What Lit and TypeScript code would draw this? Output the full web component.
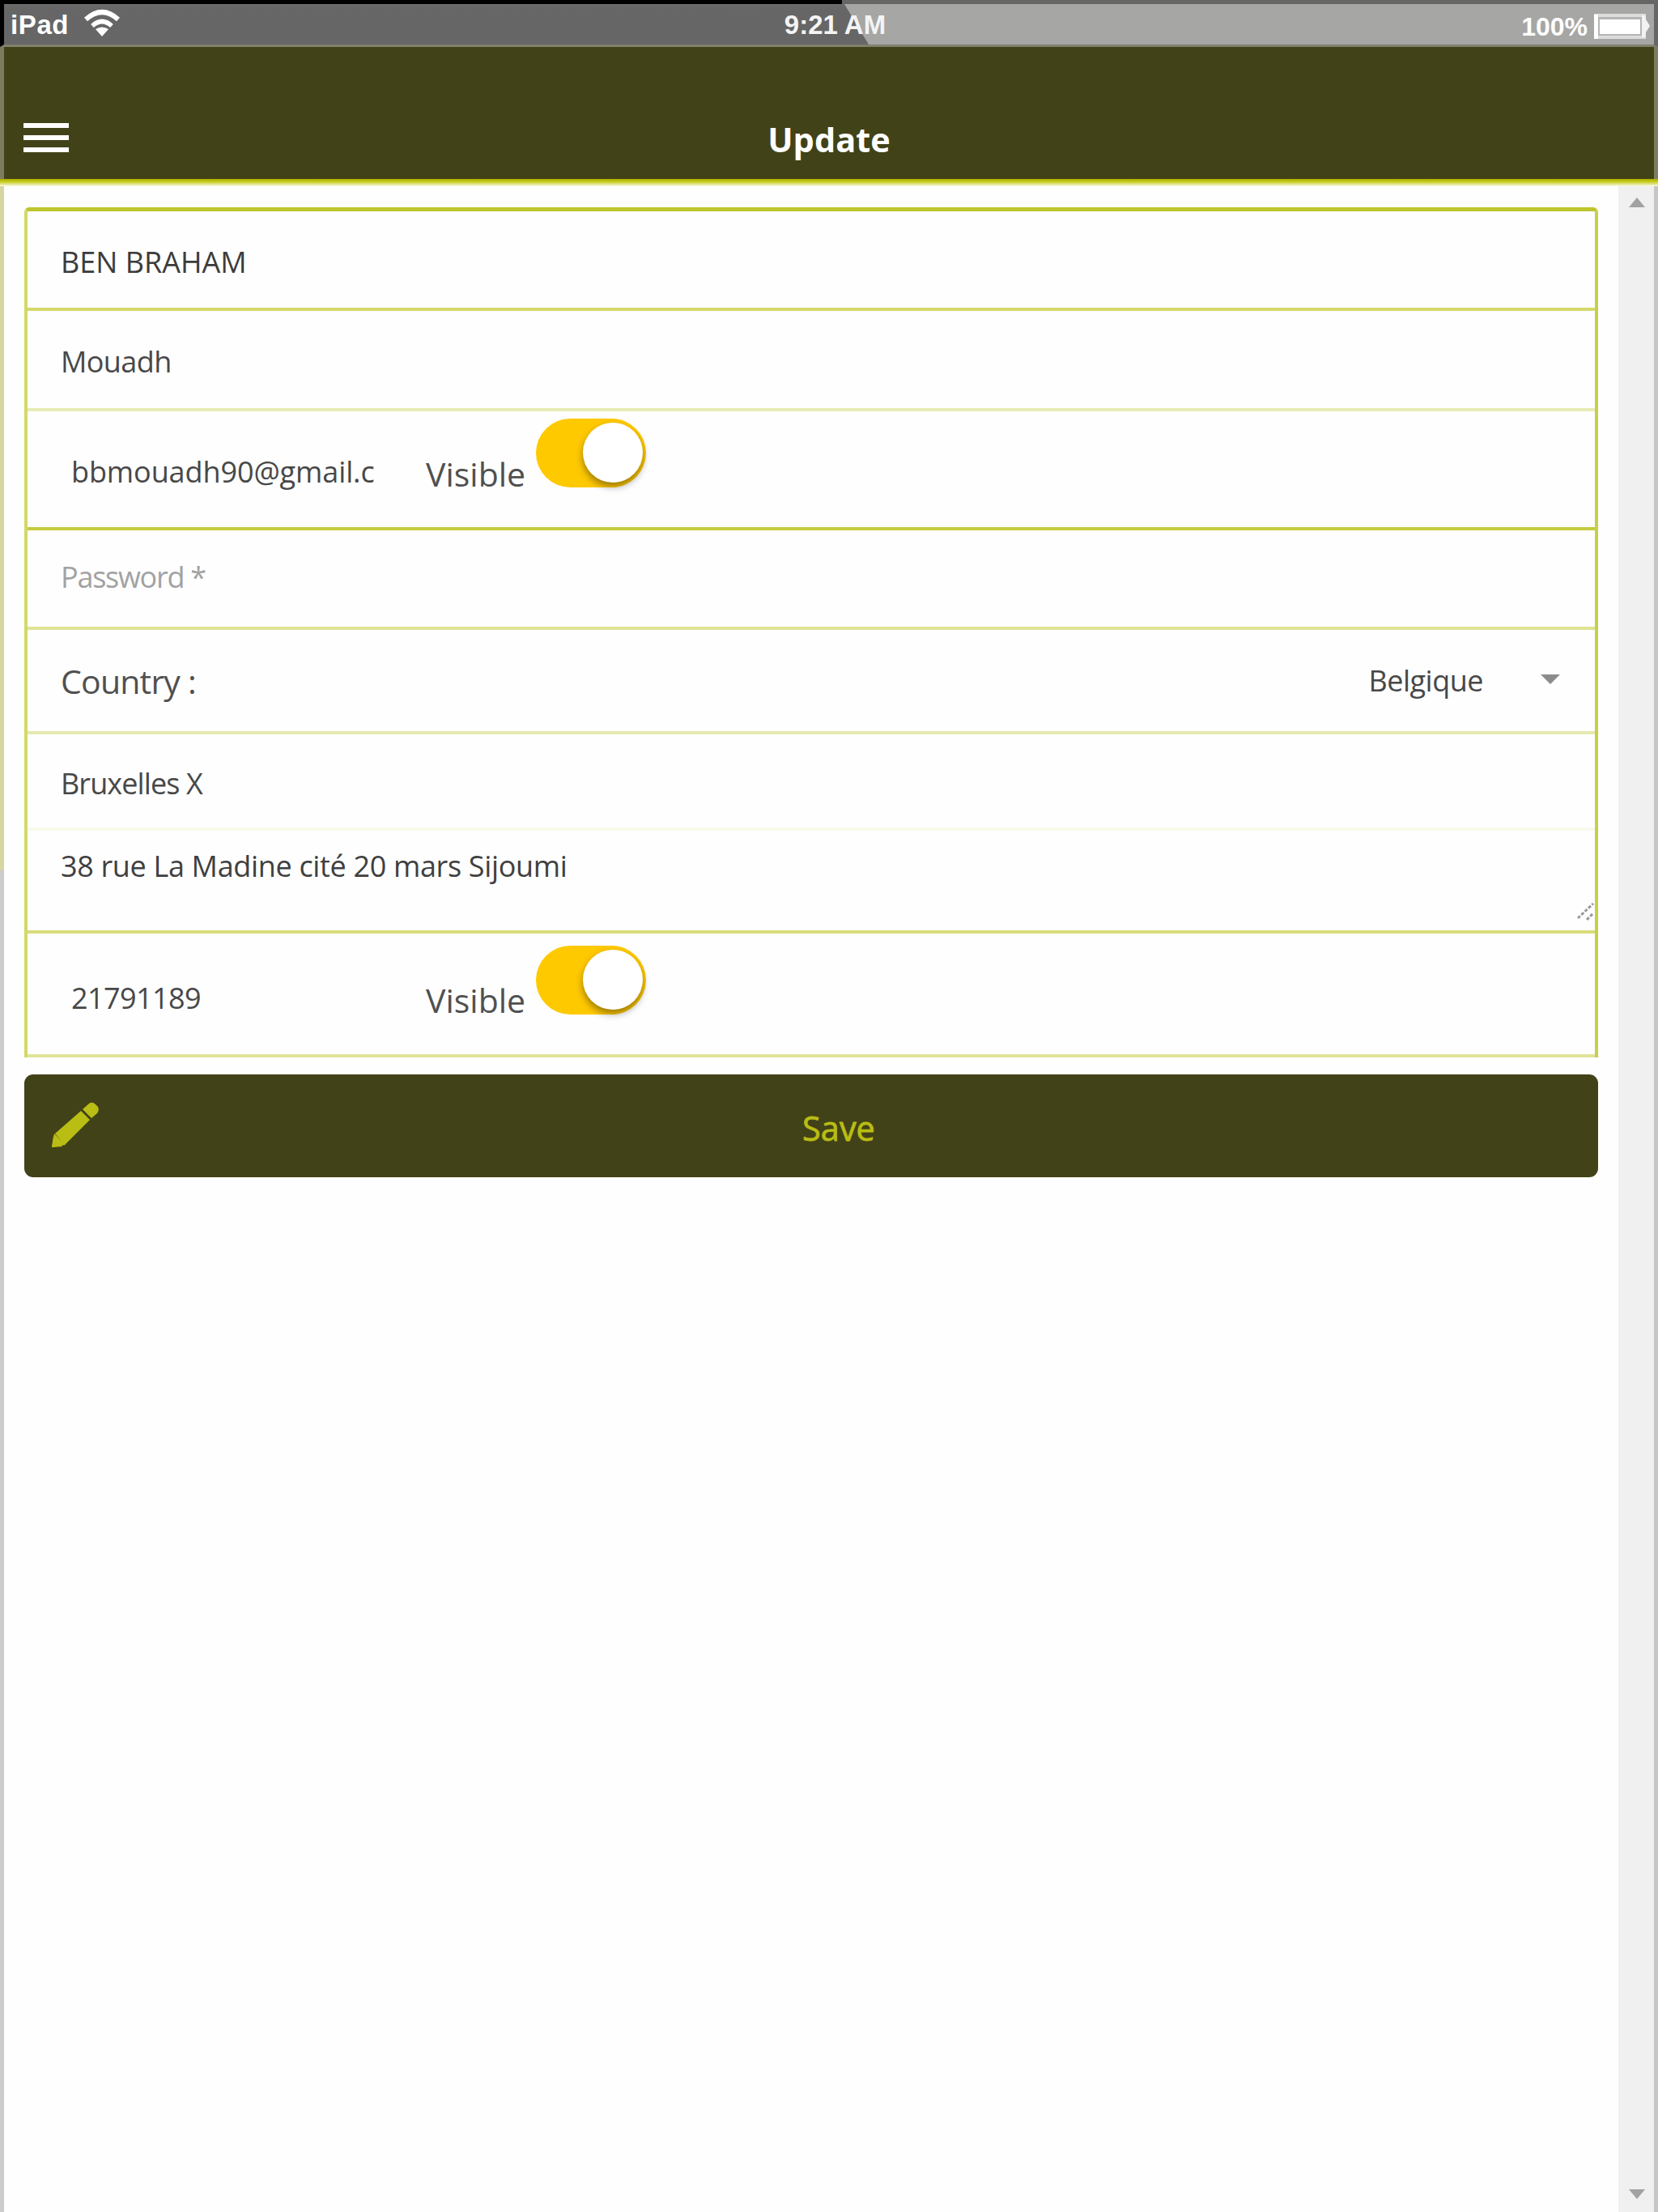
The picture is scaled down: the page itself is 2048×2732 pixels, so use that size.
import { LitElement, html, css } from "lit";
import { customElement } from "lit/decorators.js";

@customElement("toggle-switch")
class ToggleSwitch extends LitElement {
  static styles = css`
    :host { display: block; }
    .track {
      box-sizing: border-box;
      width: 136px;
      height: 85px;
      border-radius: 43px;
      background: #ffc900;
      padding: 5px 4px 5px;
      display: flex;
      justify-content: flex-end;
    }
    .knob {
      width: 74px;
      height: 74px;
      border-radius: 50%;
      background: #fff;
      box-shadow: 0 5px 10px rgba(0, 0, 0, 0.4);
    }
  `;
  render() {
    return html`<div class="track"><div class="knob"></div></div>`;
  }
}

@customElement("status-bar")
class StatusBar extends LitElement {
  static styles = css`
    :host { display: block; }
    .bar {
      box-sizing: border-box;
      height: 58px;
      border: 5px solid #000;
      border-right-color: #666;
      border-bottom: 3px solid #80806c;
      border-top: 0;
      display: grid;
      grid-template-columns: 1fr auto 1fr;
      background: linear-gradient(#6f6f6f, #666 12px);
      color: #fff;
      font: bold 33px/50px "Liberation Sans", Arial, sans-serif;
      position: relative;
      padding-top: 5px;
    }
    .cap { position: absolute; left: -5px; top: 0; width: 2048px; height: 5px; background: #000; }
    .glare { position: absolute; left: 1035px; top: 0; width: 1003px; height: 55px; background: #a6a6a5; clip-path: polygon(0 0, 100% 0, 100% 100%, 33px 100%); }
    .glarecap { position: absolute; left: 1035px; top: 0; width: 1008px; height: 5px; background: #666; }
    .left, .mid, .right { position: relative; display: flex; height: 50px; }
    .left { padding-left: 8px; gap: 18px; }
    .left .text { letter-spacing: 0.6px; }
    .mid { color: #f4f4f4; padding-left: 15px; }
    .text { line-height: 52px; }
    .right { justify-content: flex-end; gap: 8px; }
    .pct { font-size: 32px; line-height: 56px; }
    .wifi { width: 46px; height: 34px; margin-top: 6px; }
    .battery { width: 70px; height: 32px; margin: 12px 4px 0 0; }
  `;
  render() {
    return html`
      <div class="bar">
        <div class="cap"></div>
        <div class="glare"></div>
        <div class="glarecap"></div>
        <div class="left">
          <span class="text">iPad</span>
          <svg class="wifi" viewBox="0 0 46 34">
            <path d="M3 13 Q23 -5 43 13" fill="none" stroke="#fff" stroke-width="6" />
            <path d="M11 21 Q23 10 35 21" fill="none" stroke="#fff" stroke-width="5.5" />
            <path d="M15 25 Q23 20 31 25 L23 34 Z" fill="#fff" />
          </svg>
        </div>
        <div class="mid"><span class="text">9:21 AM</span></div>
        <div class="right">
          <span class="pct">100%</span>
          <svg class="battery" viewBox="0 0 70 32">
            <rect x="2" y="2" width="60" height="27" fill="#b5b5b5" stroke="#dcdcdc" stroke-width="4" />
            <rect x="0" y="1" width="5" height="30" fill="#fff" />
            <rect x="7" y="7" width="50" height="18" fill="#fff" />
            <path d="M59 2 h5 v5 l5 8 l-5 8 v6 h-5 z" fill="#f2f2f2" />
          </svg>
        </div>
      </div>
    `;
  }
}

@customElement("app-root")
class AppRoot extends LitElement {
  static styles = css`
    :host {
      display: block;
      width: 2048px;
      height: 2732px;
      overflow: hidden;
      background: #fff;
      font-family: "Open Sans", "Noto Sans", sans-serif;
      color: #484848;
    }
    .page { display: flex; flex-direction: column; height: 2732px; }
    .header {
      box-sizing: border-box;
      height: 163px;
      display: grid;
      grid-template-columns: 1fr auto 1fr;
      background: #424218;
      border-left: 5px solid #7c7c5c;
      border-right: 5px solid #7c7c62;
      color: #fff;
    }
    .menu { display: flex; flex-direction: column; gap: 9px; padding: 94px 0 0 24px; }
    .line { width: 56px; height: 6px; background: #fff; }
    .title { font-weight: 700; font-size: 41.5px; line-height: 56px; padding-top: 86px; }
    .rule { height: 9px; background: linear-gradient(#a8ac00, #c4c916 3px, #dce07a 6px, #fbfcec); }
    .body { flex: 1; display: flex; min-height: 0; }
    .edge { width: 5px; display: flex; flex-direction: column; }
    .edge-top { height: 845px; background: #d6d6a2; }
    .edge-rest { flex: 1; background: #ccc; }
    .content { flex: 1; padding: 26px 25px 0; background: #fefefe; }
    .form {
      border: solid #d3d968;
      border-width: 5px 4px 0 4px;
      border-top-color: #bfc42e;
      border-right-color: #c8cf48;
      border-radius: 6px 6px 0 0;
    }
    .row {
      box-sizing: border-box;
      display: flex;
      border-bottom: 4px solid #d4d96c;
      padding-left: 41px;
      font-size: 36px;
      line-height: 50px;
    }
    .surname { height: 123px; padding-top: 38px; color: #3c3c3c; }
    .firstname { height: 124px; padding-top: 38px; border-color: #e8ebb6; letter-spacing: -0.6px; }
    .email { height: 147px; border-color: #c5cb3e; }
    .password { height: 123px; padding-top: 33px; border-color: #dfe392; color: #a2a2a2; letter-spacing: -1.25px; }
    .country { height: 129px; border-color: #e6e9b0; justify-content: space-between; padding-right: 43px; }
    .city { height: 119px; padding-top: 36px; border-color: #f8faea; letter-spacing: -0.9px; }
    .address { height: 127px; padding-top: 19px; border-color: #d9dd7c; justify-content: space-between; color: #404040; letter-spacing: -0.34px; }
    .phone { height: 153px; border-color: #e0e49a; }
    .value { width: 439px; padding-left: 13px; box-sizing: border-box; letter-spacing: -0.1px; }
    .label { font-size: 41px; color: #505050; }
    .email .value { padding-top: 50px; }
    .email .label { padding-top: 52px; }
    .email .switch { margin-top: 9px; }
    .phone .value { padding-top: 55px; letter-spacing: -0.6px; }
    .phone .label { padding-top: 57px; }
    .phone .switch { margin-top: 15px; }
    .email .label, .phone .label { width: 136px; padding-left: 12px; }
    .country .label { padding-top: 38px; letter-spacing: -0.8px; }
    .select { display: flex; gap: 71px; padding-top: 38px; letter-spacing: -0.5px; }
    .arrow { width: 24px; height: 12px; margin-top: 17px; fill: #8c8c8c; }
    .grip { width: 24px; height: 26px; margin: 68px 0 0; }
    .save {
      box-sizing: border-box;
      height: 127px;
      margin-top: 21px;
      border-radius: 11px;
      background: #424218;
      color: #b9bd14;
      display: grid;
      grid-template-columns: 1fr auto 1fr;
      padding: 33px 0 0 33px;
      font-size: 41.5px;
      line-height: 66px;
    }
    .save-label { padding-left: 35px; -webkit-text-stroke: 0.8px #b9bd14; }
    .pencil { width: 60px; height: 58px; }
    .scroll {
      width: 44px;
      background: #f0f0f0;
      display: flex;
      flex-direction: column;
      justify-content: space-between;
      align-items: center;
      padding: 14px 0 16px 2px;
      box-sizing: border-box;
    }
    .tri { width: 20px; height: 12px; fill: #a2a2a2; }
    .side { width: 5px; background: #c6c6c6; }
  `;

  render() {
    return html`
      <div class="page">
        <status-bar></status-bar>
        <div class="header">
          <div class="menu">
            <div class="line"></div>
            <div class="line"></div>
            <div class="line"></div>
          </div>
          <div class="title">Update</div>
          <div></div>
        </div>
        <div class="rule"></div>
        <div class="body">
          <div class="edge"><div class="edge-top"></div><div class="edge-rest"></div></div>
          <div class="content">
            <div class="form">
              <div class="row surname">BEN BRAHAM</div>
              <div class="row firstname">Mouadh</div>
              <div class="row email">
                <div class="value">bbmouadh90@gmail.c</div>
                <div class="label">Visible</div>
                <toggle-switch class="switch"></toggle-switch>
              </div>
              <div class="row password">Password *</div>
              <div class="row country">
                <div class="label">Country&nbsp;:</div>
                <div class="select">
                  Belgique
                  <svg class="arrow" viewBox="0 0 24 12"><path d="M0 0 H24 L12 12 Z" /></svg>
                </div>
              </div>
              <div class="row city">Bruxelles X</div>
              <div class="row address">
                38 rue La Madine cité 20 mars Sijoumi
                <svg class="grip" viewBox="0 0 24 26">
                  <path d="M3 21 L22 3 M14 23 L22 15" fill="none" stroke="#999" stroke-width="3" stroke-dasharray="4 2" />
                </svg>
              </div>
              <div class="row phone">
                <div class="value">21791189</div>
                <div class="label">Visible</div>
                <toggle-switch class="switch"></toggle-switch>
              </div>
            </div>
            <div class="save">
              <svg class="pencil" viewBox="0 0 60 58">
                <path d="M1 57 L3 43 L14 56 Z M5 40 L37 12 L48 23 L17 54 Z M39 10 L47 3 Q51 0 55 4 L58 7 Q60 11 57 15 L50 21 Z" fill="#b9bd14" />
                <path d="M1 57 L4 40 L18 54 Z" fill="#b9bd14" />
              </svg>
              <div class="save-label">Save</div>
              <div></div>
            </div>
          </div>
          <div class="scroll">
            <svg class="tri" viewBox="0 0 22 13"><path d="M0 13 H22 L11 0 Z" /></svg>
            <svg class="tri" viewBox="0 0 22 13"><path d="M0 0 H22 L11 13 Z" /></svg>
          </div>
          <div class="side"></div>
        </div>
      </div>
    `;
  }
}
